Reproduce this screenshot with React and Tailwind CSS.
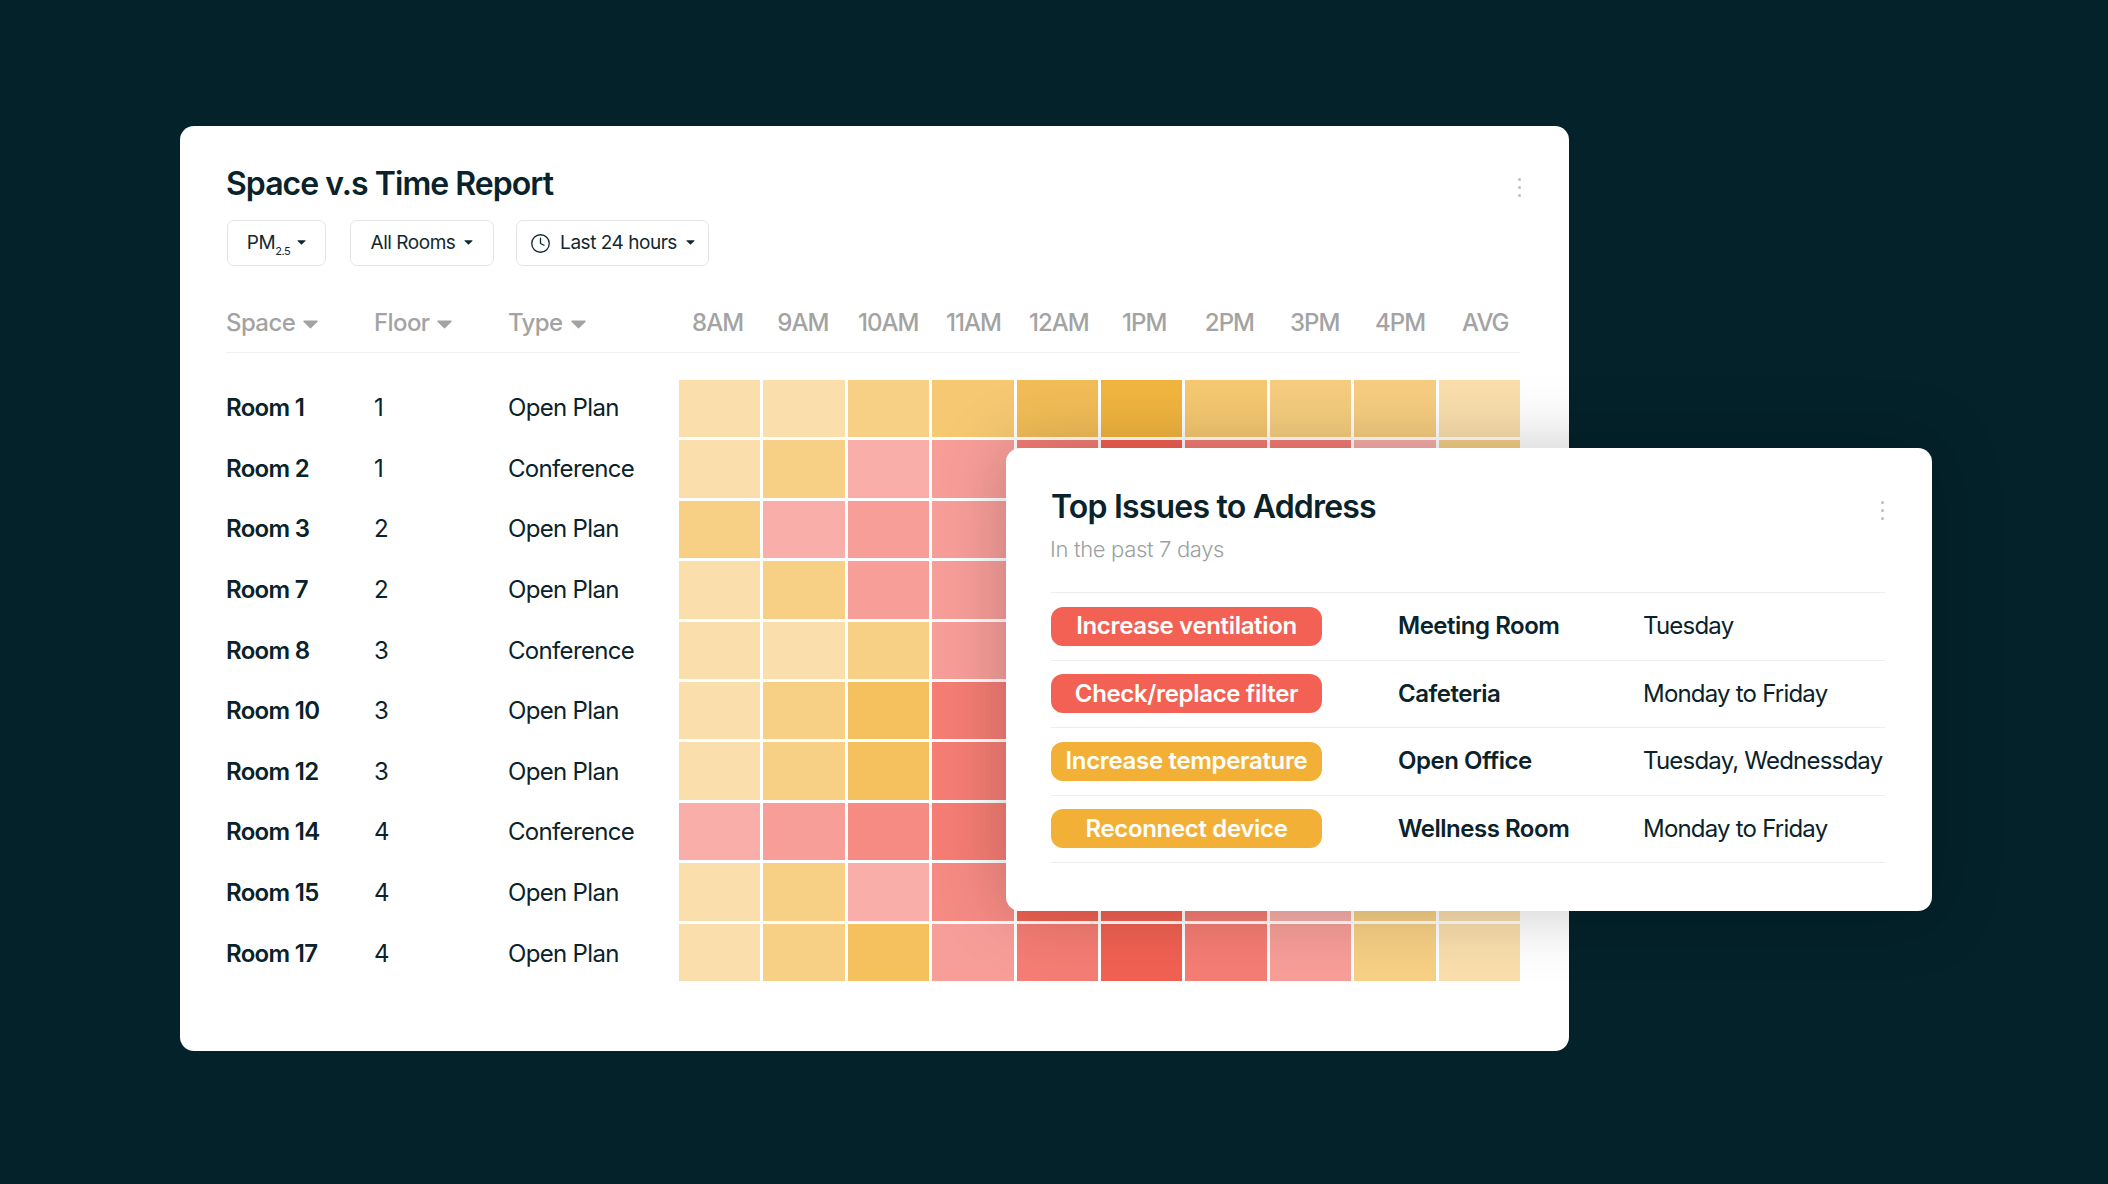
import React from "react";
import { Clock } from "lucide-react";

const L = "bg-[#fadfad]", M = "bg-[#f7d085]", S = "bg-[#f5c15f]", D = "bg-[#f1b53f]";
const PL = "bg-[#f9aea9]", P = "bg-[#f89e99]", PS = "bg-[#f68b84]", R = "bg-[#f57d74]", X = "bg-[#f16152]";

const rows = [
  ["Room 1", "1", "Open Plan", [L, L, M, "bg-[#f6c872]", "bg-[#f2bd58]", D, "bg-[#f5c871]", "bg-[#f6cd7e]", "bg-[#f6cd80]", L]],
  ["Room 2", "1", "Conference", [L, M, PL, P, R, X, R, R, PL, M]],
  ["Room 3", "2", "Open Plan", [M, PL, P, P, R, X, R, P, M, L]],
  ["Room 7", "2", "Open Plan", [L, M, P, P, R, X, R, P, M, L]],
  ["Room 8", "3", "Conference", [L, L, M, P, R, R, P, PL, M, L]],
  ["Room 10", "3", "Open Plan", [L, M, S, R, R, X, R, P, M, L]],
  ["Room 12", "3", "Open Plan", [L, M, S, R, R, X, R, P, M, L]],
  ["Room 14", "4", "Conference", [PL, P, PS, R, R, X, R, P, M, L]],
  ["Room 15", "4", "Open Plan", [L, M, PL, PS, X, X, R, PL, M, L]],
  ["Room 17", "4", "Open Plan", [L, M, S, P, R, X, R, P, M, L]],
];

const hours = ["8AM", "9AM", "10AM", "11AM", "12AM", "1PM", "2PM", "3PM", "4PM", "AVG"];

const issues = [
  ["Increase ventilation", "bg-[#f36154]", "Meeting Room", "Tuesday"],
  ["Check/replace filter", "bg-[#f36154]", "Cafeteria", "Monday to Friday"],
  ["Increase temperature", "bg-[#f2b136]", "Open Office", "Tuesday, Wednessday"],
  ["Reconnect device", "bg-[#f2b136]", "Wellness Room", "Monday to Friday"],
];

function Caret({ className }) {
  return (
    <svg viewBox="0 0 10 6" className={className} fill="currentColor">
      <path d="M0.6 0.4h8.8a.4.4 0 0 1 .3.7L5.3 5.5a.4.4 0 0 1-.6 0L.3 1.1a.4.4 0 0 1 .3-.7z" />
    </svg>
  );
}

function Kebab() {
  return (
    <div className="flex flex-col gap-[5px] w-[3px]">
      <span className="w-[3px] h-[3px] rounded-full bg-[#b9bfc1]" />
      <span className="w-[3px] h-[3px] rounded-full bg-[#b9bfc1]" />
      <span className="w-[3px] h-[3px] rounded-full bg-[#b9bfc1]" />
    </div>
  );
}

function FilterButton({ className, children }) {
  return (
    <div className={`h-[46px] flex items-center justify-center rounded-[7px] border border-[#e3e5e6] text-[19px] tracking-[-0.025em] text-[#12282f] ${className}`}>
      {children}
    </div>
  );
}

function HeadCell({ w, children }) {
  return (
    <div className={`${w} shrink-0 flex items-center gap-[8px]`}>
      {children}
      <Caret className="w-[15px] h-[9px] text-[#a3a3a3] mt-[2px]" />
    </div>
  );
}

export default function App() {
  return (
    <div
      className="relative w-[2108px] h-[1184px] overflow-hidden bg-[#04222a] pt-[126px] pl-[180px] text-[#0a2229]"
      style={{ fontFamily: "Inter, 'Noto Sans', sans-serif" }}
    >
      <div className="w-[1389px] h-[925px] rounded-[14px] bg-white pl-[46px] pr-[49px] pt-[36px]">
        <div className="flex items-center justify-between h-[44px]">
          <h1 className="text-[32px] font-semibold tracking-[-0.03em] leading-[44px]">Space v.s Time Report</h1>
          <div className="mr-[-1px] mt-[6px]"><Kebab /></div>
        </div>

        <div className="flex mt-[14px] ml-[1px]">
          <FilterButton className="w-[99px] gap-[7px]">
            <span>PM<sub className="text-[11px] leading-none align-[-3px]">2.5</sub></span>
            <Caret className="w-[9px] h-[5px] mb-[2px]" />
          </FilterButton>
          <FilterButton className="w-[144px] ml-[24px] gap-[9px]">
            <span>All Rooms</span>
            <Caret className="w-[9px] h-[5px] mb-[2px]" />
          </FilterButton>
          <FilterButton className="w-[193px] ml-[22px] gap-[9px]">
            <Clock className="w-[21px] h-[21px]" strokeWidth={1.5} />
            <span>Last 24 hours</span>
            <Caret className="w-[9px] h-[5px] mb-[2px]" />
          </FilterButton>
        </div>

        <div className="flex items-center h-[40px] box-content pt-[1px] pb-[9px] mt-[36px] border-b border-[#eef0f0] text-[24px] font-medium tracking-[-0.025em] text-[#a3a3a3]">
          <HeadCell w="w-[148px]">Space</HeadCell>
          <HeadCell w="w-[134px]">Floor</HeadCell>
          <HeadCell w="w-[167px]">Type</HeadCell>
          <div className="w-[853px] shrink-0 grid grid-cols-10 text-center tracking-[-0.04em]">
            {hours.map((h) => (
              <div key={h}>{h}</div>
            ))}
          </div>
        </div>

        <div className="mt-[27px] flex">
          <div className="w-[453px] shrink-0 mt-[-2px] flex flex-col text-[24px] tracking-[-0.028em]">
            {rows.map(([name, floor, type]) => (
              <div key={name} className="flex items-center h-[60.6px]">
                <div className="w-[148px] shrink-0 font-semibold">{name}</div>
                <div className="w-[134px] shrink-0">{floor}</div>
                <div className="w-[171px] shrink-0">{type}</div>
              </div>
            ))}
          </div>
          <div className="w-[841px] shrink-0 flex flex-col gap-[3px]">
            {rows.map(([name, , , cells]) => (
              <div key={name} className="h-[57.4px] grid grid-cols-10 gap-[3px]">
                {cells.map((c, i) => (
                  <div key={i} className={c} />
                ))}
              </div>
            ))}
          </div>
        </div>
      </div>

      <div className="absolute left-[1006px] top-[448px] w-[926px] h-[463px] rounded-[14px] bg-white pt-[37px] pl-[45px] pr-[47px] shadow-[0_0_70px_rgba(0,0,0,0.22)]">
        <div className="flex items-center justify-between h-[44px]">
          <h2 className="text-[32px] font-semibold tracking-[-0.025em] leading-[44px]">Top Issues to Address</h2>
          <div className="mr-[1px] mt-[6px]"><Kebab /></div>
        </div>
        <div className="text-[22px] leading-[30px] mt-[5px] ml-[-1px] tracking-[-0.015em] font-light text-[#9a9fa1]">In the past 7 days</div>
        <div className="mt-[28px] border-t border-[#eceeee]">
          {issues.map(([label, color, place, when]) => (
            <div key={label} className="flex items-center h-[67.5px] border-b border-[#eceeee] text-[24px] tracking-[-0.033em]">
              <div className={`${color} w-[271px] h-[39px] rounded-[12px] flex items-center justify-center text-white font-semibold shrink-0 tracking-[-0.014em]`}>
                {label}
              </div>
              <div className="w-[245px] pl-[76px] box-content shrink-0 font-semibold whitespace-nowrap tracking-[-0.02em]">{place}</div>
              <div className="whitespace-nowrap">{when}</div>
            </div>
          ))}
        </div>
      </div>
    </div>
  );
}
